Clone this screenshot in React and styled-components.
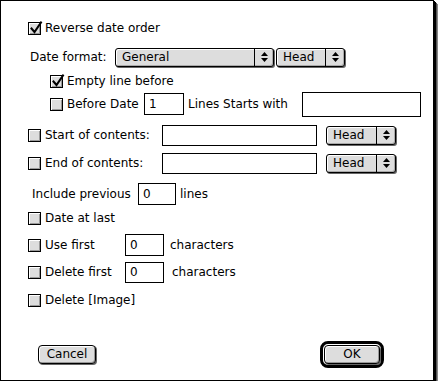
import React from "react";
import styled, { createGlobalStyle } from "styled-components";

const GlobalStyle = createGlobalStyle`
  html, body {
    margin: 0;
    padding: 0;
    background: #fff;
  }
  body {
    font-family: "DejaVu Sans", "Liberation Sans", sans-serif;
    font-size: 12px;
    color: #000;
  }
`;

const Window = styled.div`
  width: 434px;
  height: 381px;
  box-sizing: border-box;
  border: 1px solid #000;
  background: #fff;
  box-shadow: 1px 1px 0 #000, 2px 2px 0 #000, 3px 3px 0 #555, 4px 4px 0 #888;
  padding-top: 16px;
  display: flex;
  flex-direction: column;
`;

const Row = styled.div`
  height: ${(p) => p.$h || 22}px;
  margin-top: ${(p) => p.$mt || 0}px;
  padding-left: ${(p) => p.$pl || 0}px;
  display: flex;
  align-items: center;
  white-space: nowrap;
`;

const Text = styled.span`
  display: inline-block;
  width: ${(p) => (p.$w ? `${p.$w}px` : "auto")};
  margin-left: ${(p) => p.$ml || 0}px;
  font-size: 12px;
  line-height: 14px;
`;

const Box = styled.span`
  position: relative;
  display: inline-block;
  width: 13px;
  height: 13px;
  box-sizing: border-box;
  border: 1px solid #000;
  background: #ddd;
  box-shadow: inset 1px 1px 0 #fff, inset -1px -1px 0 #999;
  flex-shrink: 0;
`;

const Tick = styled.svg`
  position: absolute;
  left: 1px;
  top: -2px;
  overflow: visible;
`;

const Field = styled.input`
  width: ${(p) => p.$w}px;
  height: ${(p) => p.$h || 22}px;
  margin-left: ${(p) => p.$ml || 0}px;
  box-sizing: border-box;
  border: 1px solid #000;
  background: #fff;
  padding: 0 0 0 4px;
  font-family: inherit;
  font-size: 12px;
  color: #000;
  outline: none;
  flex-shrink: 0;
`;

const Popup = styled.div`
  width: ${(p) => p.$w}px;
  height: 19px;
  margin-left: ${(p) => p.$ml || 0}px;
  box-sizing: border-box;
  border: 1px solid #000;
  border-radius: 3px;
  background: #ddd;
  box-shadow: inset 1px 1px 0 #fff, inset -1px -1px 0 #aaa, 1px 1px 0 #666;
  display: flex;
  align-items: center;
  flex-shrink: 0;
`;

const PopupLabel = styled.span`
  flex: 1;
  padding-left: 6px;
  font-size: 12px;
`;

const PopupArrows = styled.span`
  width: 18px;
  height: 100%;
  border-left: 1px solid #000;
  display: flex;
  align-items: center;
  justify-content: center;
`;

const ButtonRow = styled.div`
  height: 28px;
  margin-top: ${(p) => p.$mt}px;
  display: flex;
  align-items: center;
  justify-content: space-between;
  padding: 0 49px 0 37px;
`;

const Button = styled.div`
  width: ${(p) => p.$w}px;
  height: 19px;
  box-sizing: border-box;
  border: 1px solid #000;
  border-radius: 4px;
  background: #ddd;
  box-shadow: inset 1px 1px 0 #fff, inset -1px -1px 0 #999, 1px 1px 0 #666;
  display: flex;
  align-items: center;
  justify-content: center;
  font-size: 12px;
`;

const DefaultRing = styled.div`
  border: 3px solid #000;
  border-radius: 8px;
  padding: 1px 1px;
  display: flex;
`;

function Check({ checked }) {
  return (
    <Box>
      {checked && (
        <Tick width="12" height="13" viewBox="0 0 12 13">
          <path
            d="M1.5 7.5 L4.5 11 L11 1.5"
            fill="none"
            stroke="#000"
            strokeWidth="2"
            strokeLinecap="square"
          />
        </Tick>
      )}
    </Box>
  );
}

function Arrows() {
  return (
    <svg width="7" height="10" viewBox="0 0 7 10">
      <path d="M3.5 0 L7 4 L0 4 Z M0 6 L7 6 L3.5 10 Z" fill="#000" />
    </svg>
  );
}

function Select({ label, w, ml }) {
  return (
    <Popup $w={w} $ml={ml}>
      <PopupLabel>{label}</PopupLabel>
      <PopupArrows>
        <Arrows />
      </PopupArrows>
    </Popup>
  );
}

export default function App() {
  return (
    <>
      <GlobalStyle />
      <Window>
        <Row $pl={27}>
          <Check checked />
          <Text $ml={4}>Reverse date order</Text>
        </Row>

        <Row $mt={7} $pl={29}>
          <Text $w={85}>Date format:</Text>
          <Select label="General" w={159} />
          <Select label="Head" w={69} ml={2} />
        </Row>

        <Row $mt={2} $pl={49}>
          <Check checked />
          <Text $ml={4}>Empty line before</Text>
        </Row>

        <Row $mt={1} $pl={49}>
          <Check />
          <Text $ml={4} $w={77}>Before Date</Text>
          <Field $w={40} defaultValue="1" readOnly />
          <Text $ml={4} $w={114}>Lines Starts with</Text>
          <Field $w={119} $h={25} readOnly />
        </Row>

        <Row $mt={9} $pl={27}>
          <Check />
          <Text $ml={4} $w={117}>Start of contents:</Text>
          <Field $w={155} $h={21} readOnly />
          <Select label="Head" w={70} ml={9} />
        </Row>

        <Row $mt={6} $pl={27}>
          <Check />
          <Text $ml={4} $w={117}>End of contents:</Text>
          <Field $w={155} $h={21} readOnly />
          <Select label="Head" w={70} ml={9} />
        </Row>

        <Row $mt={9} $pl={31}>
          <Text $w={106}>Include previous</Text>
          <Field $w={38} defaultValue="0" readOnly />
          <Text $ml={4}>lines</Text>
        </Row>

        <Row $mt={2} $pl={27}>
          <Check />
          <Text $ml={4}>Date at last</Text>
        </Row>

        <Row $mt={5} $pl={27}>
          <Check />
          <Text $ml={4} $w={80}>Use first</Text>
          <Field $w={39} defaultValue="0" readOnly />
          <Text $ml={6}>characters</Text>
        </Row>

        <Row $mt={5} $pl={27}>
          <Check />
          <Text $ml={4} $w={80}>Delete first</Text>
          <Field $w={39} $h={21} defaultValue="0" readOnly />
          <Text $ml={8}>characters</Text>
        </Row>

        <Row $mt={6} $pl={27}>
          <Check />
          <Text $ml={4}>Delete [Image]</Text>
        </Row>

        <ButtonRow $mt={29}>
          <Button $w={58}>Cancel</Button>
          <DefaultRing>
            <Button $w={56}>OK</Button>
          </DefaultRing>
        </ButtonRow>
      </Window>
    </>
  );
}
